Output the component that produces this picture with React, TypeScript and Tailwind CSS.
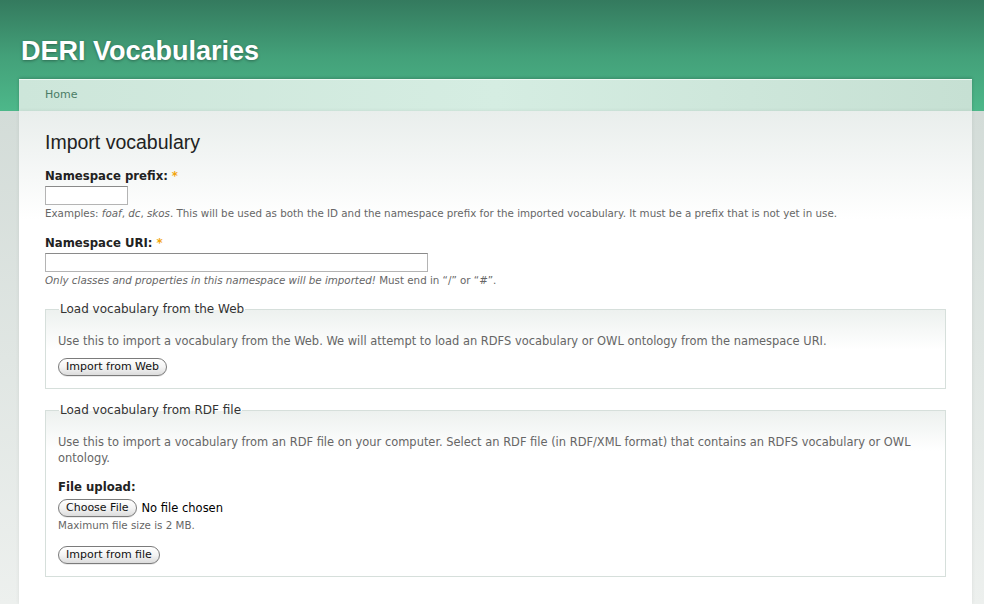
import React from 'react';

const verdana = "font-['DejaVu_Sans',Verdana,sans-serif]";

function PillButton({ children }: { children: React.ReactNode }) {
  return (
    <button className="h-[18px] rounded-full border border-[#7b7b7b] bg-gradient-to-b from-white via-[#f4f4f4] to-[#dcdcdc] px-[7px] text-[11px] leading-[16px] text-[#111] font-['DejaVu_Sans',sans-serif] shadow-[0_1px_0_rgba(0,0,0,0.08)]">
      {children}
    </button>
  );
}

function Required() {
  return <span className="text-[#f2a40b] ml-[4px]">*</span>;
}

export default function App() {
  return (
    <div className="w-[984px] h-[604px] overflow-hidden bg-[#edf0ee] font-['DejaVu_Sans',sans-serif]">
      <div className="bg-gradient-to-b from-[#347a5e] via-[#43a079] to-[#4db88a]">
        <div className="h-[79px] pl-[21px] pt-[36px]">
          <h1 className="text-[27px] leading-[30px] font-bold text-white font-['Liberation_Sans',Arial,sans-serif] [text-shadow:0_1px_3px_rgba(0,0,0,0.35)]">
            DERI Vocabularies
          </h1>
        </div>
        <div className="ml-[19px] mr-[12px] h-[32px] border-t border-[#eef8f3] bg-gradient-to-r from-[#cde6da] via-[#d5ede2] to-[#c6e0d3] shadow-[0_-1px_3px_rgba(0,0,0,0.2)] pl-[26px] flex items-center">
          <a className={`${verdana} text-[11px] text-[#4b7c66]`}>Home</a>
        </div>
      </div>

      <div className="bg-gradient-to-b from-[#d3dcd8] to-[#edf0ee] h-[493px]">
        <div className="ml-[19px] mr-[12px] h-full bg-gradient-to-b from-[#e9eeec] via-white via-[22%] to-white px-[26px] pt-[19px] shadow-[0_0_4px_rgba(0,0,0,0.08)]">
          <h2 className="text-[19.5px] leading-[24px] text-[#222] font-['Liberation_Sans',Arial,sans-serif]">Import vocabulary</h2>

          <div className="mt-[15px]">
            <label className="block text-[11.7px] leading-[14px] font-bold text-[#222]">
              Namespace prefix:<Required />
            </label>
            <input className="block mt-[3px] w-[83px] h-[19px] border border-[#b4b4b4] border-t-[#8a8a8a] bg-white" />
            <p className="mt-[1px] text-[10.3px] leading-[14px] text-[#666]">
              Examples: <em>foaf</em>, <em>dc</em>, <em>skos</em>. This will be used as both the ID and the namespace prefix for the imported vocabulary. It must be a prefix that is not yet in use.
            </p>
          </div>

          <div className="mt-[16px]">
            <label className="block text-[11.7px] leading-[14px] font-bold text-[#222]">
              Namespace URI:<Required />
            </label>
            <input className="block mt-[3px] w-[383px] h-[19px] border border-[#b4b4b4] border-t-[#8a8a8a] bg-white" />
            <p className="mt-[1px] text-[10.3px] leading-[14px] text-[#666]">
              <em>Only classes and properties in this namespace will be imported!</em> Must end in “/” or “#”.
            </p>
          </div>

          <fieldset className="mt-[15px] border border-[#d6dfdb] bg-gradient-to-b from-[#edf1ef] to-white to-[40px] px-[12px] pb-[12px]">
            <legend className="ml-[1px] px-[1px] text-[12px] leading-[14px] text-[#333]">Load vocabulary from the Web</legend>
            <p className="mt-[17px] text-[11.45px] leading-[16px] text-[#666]">
              Use this to import a vocabulary from the Web. We will attempt to load an RDFS vocabulary or OWL ontology from the namespace URI.
            </p>
            <div className="mt-[9px] flex">
              <PillButton>Import from Web</PillButton>
            </div>
          </fieldset>

          <fieldset className="mt-[14px] border border-[#d6dfdb] bg-gradient-to-b from-[#edf1ef] to-white to-[40px] px-[12px] pb-[12px]">
            <legend className="ml-[1px] px-[1px] text-[12px] leading-[14px] text-[#333]">Load vocabulary from RDF file</legend>
            <p className="mt-[17px] text-[11.45px] leading-[16px] text-[#666]">
              Use this to import a vocabulary from an RDF file on your computer. Select an RDF file (in RDF/XML format) that contains an RDFS vocabulary or OWL ontology.
            </p>
            <label className="block mt-[14px] text-[11.7px] leading-[14px] font-bold text-[#222]">File upload:</label>
            <div className="mt-[5px] flex items-center gap-[5px]">
              <PillButton>Choose File</PillButton>
              <span className="text-[11.5px] leading-[18px] text-black">No file chosen</span>
            </div>
            <p className="mt-[1px] text-[10.3px] leading-[14px] text-[#666]">Maximum file size is 2 MB.</p>
            <div className="mt-[14px] flex">
              <PillButton>Import from file</PillButton>
            </div>
          </fieldset>
        </div>
      </div>
    </div>
  );
}
